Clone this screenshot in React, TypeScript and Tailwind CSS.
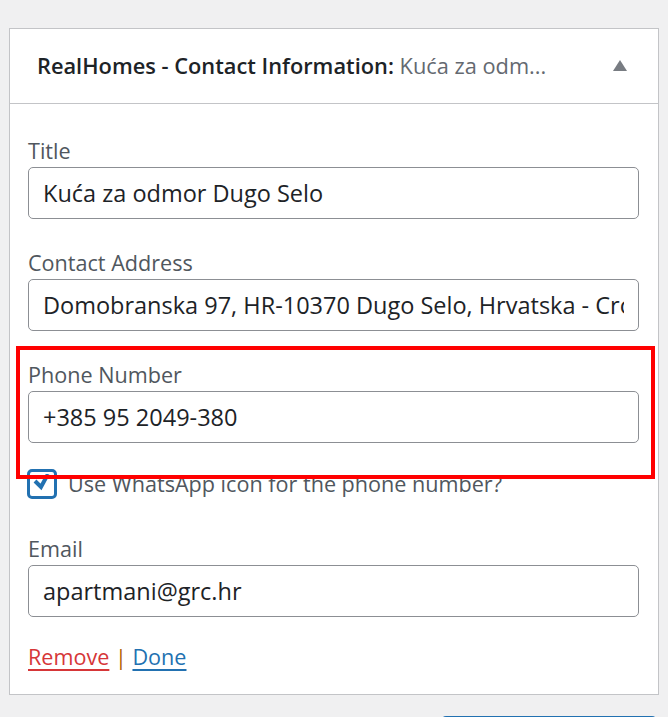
export default function App() {
  const font = { fontFamily: '"Open Sans", "Noto Sans", sans-serif' };
  return (
    <div className="min-h-[717px] w-[668px] overflow-hidden bg-[#f0f0f1] pt-[28px]" style={font}>
      <div className="ml-[9px] w-[650px] border border-[#c3c4c7] bg-white">
        <div className="flex h-[75px] items-center justify-between border-b border-[#c3c4c7] pl-[27px] pr-[31px]">
          <h3 className="text-[21.8px] font-semibold text-[#1d2327]">
            RealHomes - Contact Information:{" "}
            <span className="font-normal text-[#646970]">Kuća za odm...</span>
          </h3>
          <svg width="14" height="11" viewBox="0 0 14 11" className="mb-[2px]">
            <path d="M7 0 L14 11 L0 11 Z" fill="#787c82" />
          </svg>
        </div>

        <div className="px-[18px] pt-[32px] pb-[22px]">
          <Field label="Title" value="Kuća za odmor Dugo Selo" />
          <Field label="Contact Address" value="Domobranska 97, HR-10370 Dugo Selo, Hrvatska - Croatia" className="mt-[29px]" />

          <div className="relative mt-[29px]">
            <div className="pointer-events-none absolute -left-[12px] -right-[15px] -top-[14px] h-[133px] border-[4px] border-[#ff0000]" />
            <Field label="Phone Number" value="+385 95 2049-380" />
            <label className="mt-[26px] flex items-center gap-[11px]">
              <span className="-ml-[1px] flex h-[30px] w-[30px] items-center justify-center rounded-[5px] border-[3px] border-[#2271b1] bg-white">
                <svg width="20" height="18" viewBox="0 0 20 18" className="-mt-[3px]">
                  <path d="M3 7 L9 13 L16 0" fill="none" stroke="#2271b1" strokeWidth="4" strokeLinejoin="miter" />
                </svg>
              </span>
              <span className="text-[21.6px] leading-[30px] text-[#50575e]">Use WhatsApp icon for the phone number?</span>
            </label>
          </div>

          <Field label="Email" value="apartmani@grc.hr" className="mt-[35px]" />

          <div className="mt-[25px] text-[21.6px] leading-[30px]">
            <a className="text-[#d63638] underline underline-offset-[4px]">Remove</a>
            <span className="text-[#b26200]"> | </span>
            <a className="text-[#2271b1] underline underline-offset-[4px]">Done</a>
          </div>
        </div>
      </div>
      <div className="ml-[442px] mt-[21px] h-[10px] w-[214px] rounded-t-[4px] border border-b-0 border-[#2271b1] bg-[#f6f7f7]" />
    </div>
  );
}

function Field({ label, value, className = "" }: { label: string; value: string; className?: string }) {
  return (
    <div className={className}>
      <div className="text-[21.6px] leading-[30px] text-[#50575e]">{label}</div>
      <input
        readOnly
        value={value}
        className="mt-[1px] h-[52px] w-[611px] rounded-[5px] border border-[#8c8f94] px-[14px] text-[23.5px] text-[#1d2327] outline-none"
        style={{ fontFamily: '"Open Sans", "Noto Sans", sans-serif' }}
      />
    </div>
  );
}
